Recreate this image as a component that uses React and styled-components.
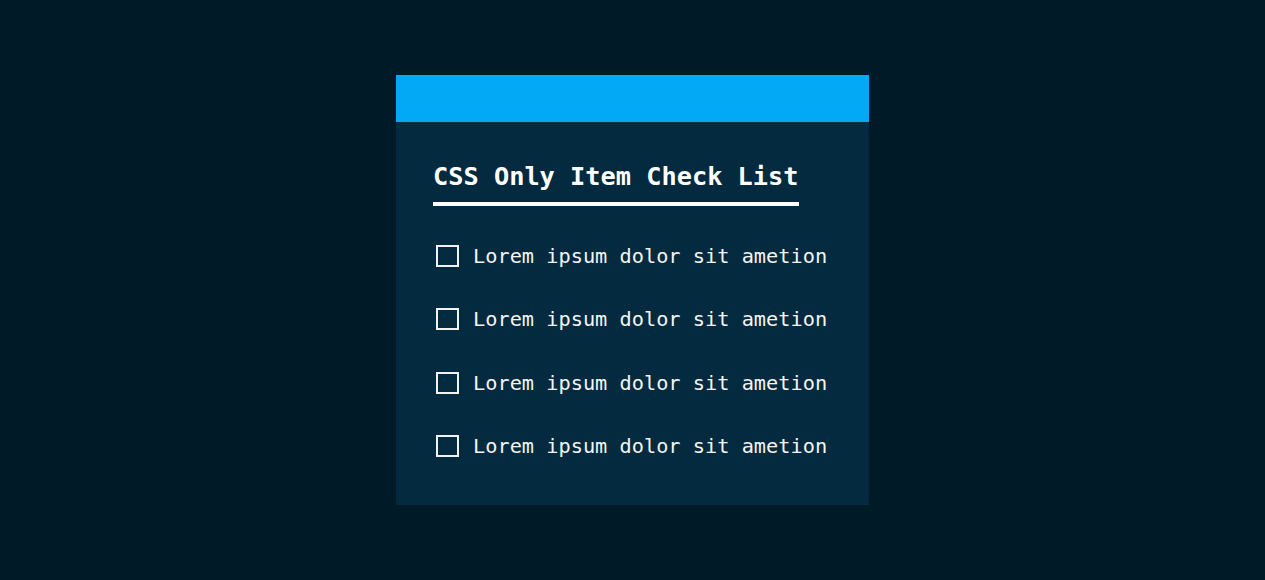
import React from "react";
import styled, { createGlobalStyle } from "styled-components";

const Global = createGlobalStyle`
  html, body { margin: 0; padding: 0; }
  body {
    background: #011a27;
    font-family: "DejaVu Sans Mono", "Liberation Mono", monospace;
  }
`;

const Page = styled.div`
  height: 580px;
  display: flex;
  align-items: center;
  justify-content: center;
`;

const Card = styled.div`
  width: 473px;
  height: 430px;
  background: #032a3e;
  display: flex;
  flex-direction: column;
`;

const Header = styled.div`
  height: 47px;
  background: #03a9f4;
  flex-shrink: 0;
`;

const Body = styled.div`
  padding: 40px 37px 0;
  display: flex;
  flex-direction: column;
  align-items: flex-start;
`;

const Title = styled.h1`
  margin: 0;
  font-size: 25.3px;
  line-height: 30px;
  font-weight: 700;
  color: #ffffff;
  padding-bottom: 10px;
  border-bottom: 4px solid #ffffff;
`;

const List = styled.ul`
  list-style: none;
  margin: 38px 0 0;
  padding: 0;
  display: flex;
  flex-direction: column;
  gap: 39.33px;
`;

const Row = styled.li`
  display: flex;
  align-items: center;
  height: 24px;
`;

const Box = styled.span`
  box-sizing: border-box;
  width: 23px;
  height: 22px;
  border: 2px solid #f2f2f2;
  margin-left: 3px;
  margin-right: 14px;
  flex-shrink: 0;
`;

const Label = styled.span`
  font-size: 20.3px;
  line-height: 24px;
  color: #f4f4f4;
  white-space: nowrap;
`;

export default function App() {
  const items = [1, 2, 3, 4];
  return (
    <>
      <Global />
      <Page>
        <Card>
          <Header />
          <Body>
            <Title>CSS Only Item Check List</Title>
            <List>
              {items.map((i) => (
                <Row key={i}>
                  <Box />
                  <Label>Lorem ipsum dolor sit ametion</Label>
                </Row>
              ))}
            </List>
          </Body>
        </Card>
      </Page>
    </>
  );
}
